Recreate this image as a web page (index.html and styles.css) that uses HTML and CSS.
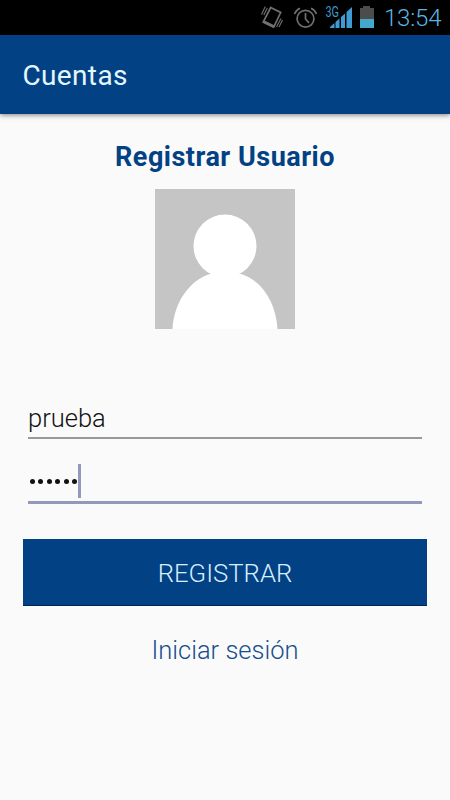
FILE: index.html
```html
<!DOCTYPE html>
<html lang="es">
<head>
<meta charset="utf-8">
<title>Cuentas</title>
<link rel="stylesheet" href="styles.css">
</head>
<body>
<div class="status">
  <svg class="status-icons" width="124" height="36" viewBox="0 0 124 36" aria-hidden="true">
    <g fill="none" stroke="#707070">
      <g stroke-width="1.7">
        <path d="M10.700 7.500 20.700 12.500 13.700 27 3.200 22Z"/>
        <path d="M3.500 21.500 13.700 26.500" stroke-width="2.700"/>
        <path d="M1.500 14.500 5.300 6.500M3.800 15 7.300 8M16.500 27 21 18.500M19 27 22.500 20" stroke-width="1.100"/>
      </g>
      <circle cx="45.500" cy="18.700" r="8.400" stroke-width="1.700"/>
      <path d="M45.500 13v6l3.500 3.800" stroke-width="1.700"/>
      <path d="M34.500 14q1.500-4 5.500-5.700M51 8.300q4 1.700 5.500 5.700" stroke-width="1.700"/>
    </g>
    <path fill="#3e9bd4" d="M70 28v-1l4.500-4V28zM75.500 28v-6l4-3.500V28zM81 28V17l4-3.500V28zM86.500 28V12l5.500-5V28z"/>
    <path fill="#4c4c4c" d="M100 8h3V6h7v2h4v11h-14z"/>
    <path fill="#44a7cc" d="M100 19h14v9h-14z"/>
    <text class="network" x="65.500" y="16.500" textLength="13.500" lengthAdjust="spacingAndGlyphs">3G</text>
  </svg>
  <span class="clock">13:54</span>
</div>
<header class="bar"><span class="bar-title">Cuentas</span></header>
<main class="content">
  <h1 class="heading"><span>Registrar Usuario</span></h1>
  <svg class="avatar" width="140" height="140" viewBox="0 0 140 140" aria-hidden="true">
    <path fill="#c5c5c5" d="M0 0h140v140H0z"/>
    <circle cx="70" cy="57" r="31.500" fill="#fff"/>
    <path fill="#fff" d="M17.500 140C19 113 35 91 55 85Q70 80 86 85C106 91 121 113 122.500 140z"/>
  </svg>
  <div class="field"><span class="value">prueba</span></div>
  <div class="field field-active"><span class="dots"><i></i><i></i><i></i><i></i><i></i><i></i></span><span class="caret"></span></div>
  <div class="button"><span>REGISTRAR</span></div>
  <div class="link"><span>Iniciar sesión</span></div>
</main>
</body>
</html>
```
FILE: styles.css
```css
body {
  margin: 0;
  height: 800px;
  overflow: hidden;
  background: #fafafa;
  font-family: Roboto, sans-serif;
}
.status {
  display: flex;
  justify-content: flex-end;
  height: 35px;
  background: #000;
}
.status-icons { flex: none; }
.network { font-size: 14px; fill: #3e9bd4; }
.clock {
  width: 66px;
  font-size: 24px;
  line-height: 37px;
  letter-spacing: -0.2px;
  color: #5bb5e0;
  font-weight: 300;
}
.bar {
  position: relative;
  display: flex;
  align-items: center;
  box-sizing: border-box;
  height: 79px;
  padding: 1px 0 0 22.5px;
  background: #024184;
  box-shadow: 0 1px 5px rgba(0, 0, 0, .5);
}
.bar-title { font-size: 28px; letter-spacing: .35px; color: #e4f7ff; }
.content {
  display: flex;
  flex-direction: column;
  padding: 25px 23px 0;
}
.heading {
  margin: 0;
  height: 36px;
  line-height: 37px;
  text-align: center;
  font-size: 27px;
  font-weight: 700;
  letter-spacing: .5px;
  color: #024184;
}
.avatar { align-self: center; margin: 14px 0 71px; }
.field {
  display: flex;
  box-sizing: border-box;
  height: 39px;
  margin: 0 5px;
  border-bottom: 2px solid #999;
  line-height: 37px;
}
.value { font-size: 25.5px; font-weight: 300; color: #111; }
.field-active {
  height: 40px;
  margin-top: 25px;
  border-bottom: 3px solid #9299bd;
}
.dots {
  display: flex;
  gap: 3.5px;
  padding: 15px 0 0 1.5px;
}
.dots i { width: 5px; height: 5px; border-radius: 50%; background: #111; }
.caret { width: 3px; height: 34px; margin-left: 1px; background: #9299bd; }
.button {
  height: 67px;
  box-sizing: border-box;
  margin-top: 35px;
  border-bottom: 1px solid #002358;
  background: #024184;
  line-height: 68px;
  text-align: center;
  font-size: 25.7px;
  font-weight: 300;
  color: #d8efff;
}
.link {
  height: 40px;
  margin-top: 24px;
  line-height: 40px;
  text-align: center;
  font-size: 25.5px;
  font-weight: 300;
  color: #174f8c;
}
```
